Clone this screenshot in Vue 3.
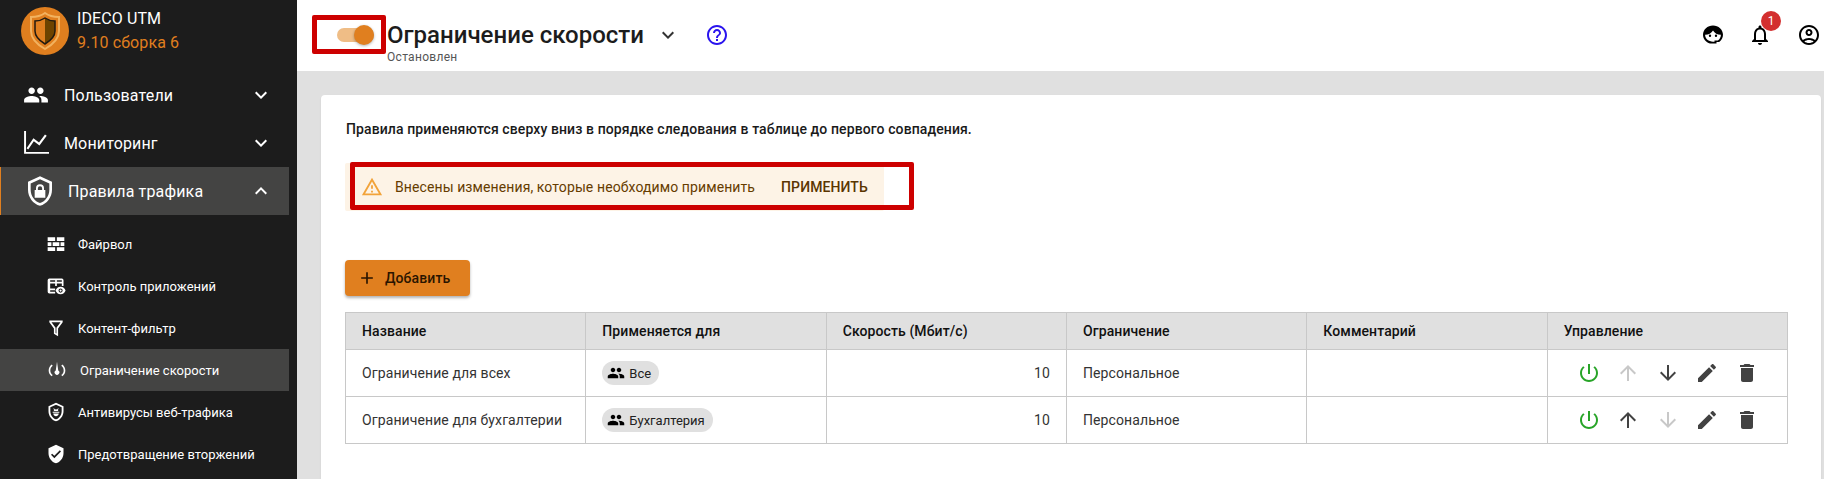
<script setup>
const icons = {
  people: 'M16 11c1.660 0 2.990-1.340 2.990-3S17.660 5 16 5c-1.660 0-3 1.340-3 3s1.340 3 3 3zm-8 0c1.660 0 2.990-1.340 2.990-3S9.660 5 8 5C6.340 5 5 6.340 5 8s1.340 3 3 3zm0 2c-2.330 0-7 1.170-7 3.500V19h14v-2.500c0-2.330-4.670-3.500-7-3.500zm8 0c-.29 0-.62.02-.97.05 1.160.84 1.970 1.970 1.970 3.450V19h6v-2.500c0-2.330-4.670-3.500-7-3.500z',
  chart: 'M1 1h1.800v19.400H24V22H1zM3.300 16.900L9.600 7.600l5.200 4 5.500-7.400 1.600 1.100-6.700 9.100-5.200-4L4.800 18z',
  down: 'M16.590 8.590L12 13.170 7.410 8.590 6 10l6 6 6-6z',
  up: 'M12 8l-6 6 1.410 1.410L12 10.830l4.590 4.580L18 14z',
  lock: 'M12 1L3 5v6c0 5.550 3.840 10.740 9 12 5.160-1.260 9-6.450 9-12V5l-9-4zm0 2.200l7 3.100V11c0 4.500-3 8.900-7 10-4-1.100-7-5.500-7-10V6.300l7-3.100zM12 7a3 3 0 0 0-3 3v1.200H8V17h8v-5.800h-1V10a3 3 0 0 0-3-3zm0 1.400a1.600 1.600 0 0 1 1.600 1.600v1.200h-3.200V10A1.600 1.600 0 0 1 12 8.400z',
  wall: 'M2 4h9v4.500H2zM13 4h9v4.500h-9zM2 10h4.500v4.500H2zM8 10h8v4.500H8zM17.500 10H22v4.500h-4.500zM2 16h9v4.500H2zM13 16h9v4.500h-9z',
  apps: 'M4 3h15a2 2 0 0 1 2 2v7h-2V9h-6v3h-2V9H5v6h6v2H5v2h6v2H4a2 2 0 0 1-2-2V5a2 2 0 0 1 2-2zm1 2v2h6V5zm8 0v2h6V5zM17.500 13c-3 0-5 2-6 4.500 1 2.500 3 4.500 6 4.500s5-2 6-4.500c-1-2.500-3-4.500-6-4.500zm0 7a2.500 2.500 0 1 1 0-5 2.500 2.500 0 0 1 0 5zm0-1.200a1.300 1.300 0 1 0 0-2.600 1.300 1.300 0 0 0 0 2.600z',
  filter: 'M4 3h16v2l-5.500 7.500V22l-5-3v-6.500L4 5zm2.600 2l4.900 6.700v6.300l1 .6v-6.900L17.400 5z',
  speed: 'M12 2l1.500 10.500a2.800 2.800 0 1 1-3 0zM5.500 5.500l1.400 1.400C5 8.500 4 10.100 4 12.500s1 4 2.900 5.600l-1.400 1.400C3.300 17.600 2 15.300 2 12.500s1.300-5.100 3.500-7zM18.500 5.500c2.200 1.900 3.500 4.200 3.500 7s-1.300 5.100-3.500 7l-1.400-1.400c1.900-1.600 2.900-3.200 2.900-5.600s-1-4-2.900-5.600z',
  bug: 'M12 1L3 5v6c0 5.550 3.840 10.740 9 12 5.160-1.260 9-6.450 9-12V5l-9-4zm0 2.400l6.800 3V11c0 4.400-2.900 8.600-6.800 9.800-3.900-1.200-6.800-5.400-6.800-9.800V6.400l6.800-3zM9.500 7.500L10.800 9a3 3 0 0 1 2.400 0l1.300-1.500.7.600-1.100 1.400c.4.400.6.800.7 1.300h-5.600c.1-.5.300-.9.700-1.300L8.800 8.100zM8 11.800h8V13H8zm.7 2h6.600c-.3 2-1.600 3.400-3.300 3.400S9 15.800 8.700 13.800z',
  shield: 'M12 1L3 5v6c0 5.550 3.840 10.740 9 12 5.160-1.260 9-6.450 9-12V5l-9-4zm-2 16l-4-4 1.410-1.410L10 14.170l6.590-6.590L18 9l-8 8z',
  help: 'M11 18h2v-2h-2v2zm1-16C6.480 2 2 6.480 2 12s4.480 10 10 10 10-4.480 10-10S17.520 2 12 2zm0 18c-4.410 0-8-3.590-8-8s3.590-8 8-8 8 3.590 8 8-3.590 8-8 8zm0-14c-2.210 0-4 1.790-4 4h2c0-1.100.9-2 2-2s2 .9 2 2c0 2-3 1.750-3 5h2c0-2.250 3-2.500 3-5 0-2.210-1.790-4-4-4z',
  bell: 'M12 22c1.100 0 2-.9 2-2h-4c0 1.100.9 2 2 2zm6-6v-5c0-3.070-1.630-5.640-4.500-6.320V4c0-.83-.67-1.500-1.500-1.500s-1.500.67-1.500 1.500v.68C7.640 5.360 6 7.920 6 11v5l-2 2v1h16v-1l-2-2zm-2 1H8v-6c0-2.480 1.510-4.500 4-4.500s4 2.020 4 4.500v6z',
  account: 'M12 2C6.480 2 2 6.480 2 12s4.480 10 10 10 10-4.480 10-10S17.520 2 12 2zM7.350 18.500C8.660 17.560 10.260 17 12 17s3.340.56 4.650 1.500C15.340 19.440 13.740 20 12 20s-3.340-.56-4.650-1.500zm10.790-1.380C16.450 15.800 14.320 15 12 15s-4.450.8-6.140 2.120C4.700 15.730 4 13.950 4 12c0-4.420 3.580-8 8-8s8 3.580 8 8c0 1.950-.7 3.730-1.860 5.120zM12 6c-1.930 0-3.500 1.570-3.500 3.500S10.070 13 12 13s3.500-1.570 3.500-3.500S13.930 6 12 6zm0 5c-.83 0-1.500-.67-1.500-1.500S11.170 8 12 8s1.500.67 1.500 1.500S12.830 11 12 11z',
  agent: 'M12 2.500C6.500 2.500 2 6.700 2 11.800c0 4.100 2.900 7.500 7 8.700h6.500v-1.600h2.700c2.400-1.600 3.800-4.200 3.800-7.100C22 6.700 17.500 2.500 12 2.500zM4.100 11.800c3.600 0 6.200-1.500 7.900-4.300 1.700 2.800 4.300 4.300 7.900 4.300 0 2.400-1.200 4.500-3 5.700h-3.400v1.200H12c-4.400 0-7.900-3-7.900-6.900zM9 11.500a1.200 1.200 0 1 0 0 2.400 1.200 1.200 0 0 0 0-2.400zm6 0a1.200 1.200 0 1 0 0 2.400 1.200 1.200 0 0 0 0-2.400z',
  warning: 'M12 5.990L19.530 19H4.470L12 5.990M12 2L1 21h22L12 2zm1 14h-2v2h2v-2zm0-6h-2v4h2v-4z',
  add: 'M19 13h-6v6h-2v-6H5v-2h6V5h2v6h6v2z',
  power: 'M13 3h-2v10h2V3zm4.830 2.170l-1.420 1.420C17.990 7.860 19 9.810 19 12c0 3.870-3.130 7-7 7s-7-3.130-7-7c0-2.190 1.010-4.140 2.580-5.420L6.170 5.170C4.230 6.820 3 9.260 3 12c0 4.970 4.030 9 9 9s9-4.030 9-9c0-2.740-1.230-5.180-3.170-6.830z',
  arrowUp: 'M4 12l1.410 1.410L11 7.830V20h2V7.830l5.580 5.590L20 12l-8-8-8 8z',
  arrowDown: 'M20 12l-1.410-1.410L13 16.170V4h-2v12.170l-5.580-5.590L4 12l8 8 8-8z',
  edit: 'M3 17.250V21h3.750L17.810 9.940l-3.750-3.750L3 17.250zM20.710 7.040c.39-.39.39-1.020 0-1.410l-2.340-2.340c-.39-.39-1.020-.39-1.410 0l-1.830 1.830 3.750 3.750 1.830-1.830z',
  trash: 'M6 19c0 1.100.9 2 2 2h8c1.100 0 2-.9 2-2V7H6v12zM19 4h-3.500l-1-1h-5l-1 1H5v2h14V4z',
}

const mainMenu = [
  { label: 'Пользователи', icon: 'people', open: false },
  { label: 'Мониторинг', icon: 'chart', open: false },
  { label: 'Правила трафика', icon: 'lock', open: true },
]
const subMenu = [
  { label: 'Файрвол', icon: 'wall' },
  { label: 'Контроль приложений', icon: 'apps' },
  { label: 'Контент-фильтр', icon: 'filter' },
  { label: 'Ограничение скорости', icon: 'speed', active: true },
  { label: 'Антивирусы веб-трафика', icon: 'bug' },
  { label: 'Предотвращение вторжений', icon: 'shield' },
]
const columns = ['Название', 'Применяется для', 'Скорость (Мбит/с)', 'Ограничение', 'Комментарий', 'Управление']
const rows = [
  { name: 'Ограничение для всех', group: 'Все', speed: 10, kind: 'Персональное', canUp: false, canDown: true },
  { name: 'Ограничение для бухгалтерии', group: 'Бухгалтерия', speed: 10, kind: 'Персональное', canUp: true, canDown: false },
]
</script>

<template>
  <div class="page">
    <aside class="sidebar">
      <div class="brand">
        <svg class="logo" width="48" height="48" viewBox="0 0 48 48">
          <circle cx="24" cy="24" r="24" fill="#e07f1f" />
          <path d="M24 6c4 3 9 4 14 4v14c0 8-7 14-14 18-7-4-14-10-14-18V10c5 0 10-1 14-4z" fill="none" stroke="#f2b25f" stroke-width="2" />
          <path d="M24 11c3 2 7 3 10 3v10c0 6-5 10-10 13z" fill="#6d4300" />
          <path d="M24 11c3 2 7 3 10 3v10c0 6-5 10-10 13-5-3-10-7-10-13V14c3 0 7-1 10-3z" fill="none" stroke="#201a10" stroke-width="1.500" />
        </svg>
        <div>
          <div class="brand-name">IDECO UTM</div>
          <div class="brand-version">9.10 сборка 6</div>
        </div>
      </div>
      <div v-for="item in mainMenu" :key="item.label" class="menu-item" :class="{ open: item.open }">
        <svg class="menu-icon" viewBox="0 0 24 24"><path fill-rule="evenodd" :d="icons[item.icon]" /></svg>
        <span class="menu-label">{{ item.label }}</span>
        <svg class="menu-arrow" width="24" height="24" viewBox="0 0 24 24"><path :d="item.open ? icons.up : icons.down" /></svg>
      </div>
      <div class="submenu">
        <div v-for="item in subMenu" :key="item.label" class="sub-item" :class="{ active: item.active }">
          <svg width="20" height="20" viewBox="0 0 24 24"><path fill-rule="evenodd" :d="icons[item.icon]" /></svg>
          <span>{{ item.label }}</span>
        </div>
      </div>
    </aside>

    <div class="content">
      <header class="topbar">
        <div class="switch-wrap">
          <div class="switch"><span class="thumb"></span></div>
          <span class="mark mark-switch"></span>
        </div>
        <div class="title-block">
          <div class="title">Ограничение скорости</div>
          <div class="status">Остановлен</div>
        </div>
        <svg class="title-arrow" width="24" height="24" viewBox="0 0 24 24"><path :d="icons.down" /></svg>
        <svg class="help" width="24" height="24" viewBox="0 0 24 24"><path :d="icons.help" /></svg>
        <div class="top-actions">
          <svg width="24" height="24" viewBox="0 0 24 24"><path fill-rule="evenodd" :d="icons.agent" /></svg>
          <div class="bell">
            <svg width="24" height="24" viewBox="0 0 24 24"><path :d="icons.bell" /></svg>
            <span class="badge">1</span>
          </div>
          <svg width="24" height="24" viewBox="0 0 24 24"><path :d="icons.account" /></svg>
        </div>
      </header>

      <main class="main">
        <section class="card">
          <p class="hint">Правила применяются сверху вниз в порядке следования в таблице до первого совпадения.</p>

          <div class="alert-wrap">
            <div class="alert">
              <svg width="22" height="22" viewBox="0 0 24 24"><path :d="icons.warning" /></svg>
              <span class="alert-text">Внесены изменения, которые необходимо применить</span>
              <span class="alert-action">ПРИМЕНИТЬ</span>
            </div>
            <span class="mark mark-alert"></span>
          </div>

          <button class="add">
            <svg width="20" height="20" viewBox="0 0 24 24"><path :d="icons.add" /></svg>
            Добавить
          </button>

          <table class="rules">
            <thead>
              <tr><th v-for="col in columns" :key="col">{{ col }}</th></tr>
            </thead>
            <tbody>
              <tr v-for="row in rows" :key="row.name">
                <td>{{ row.name }}</td>
                <td>
                  <span class="chip">
                    <svg width="18" height="18" viewBox="0 0 24 24"><path :d="icons.people" /></svg>
                    {{ row.group }}
                  </span>
                </td>
                <td class="num">{{ row.speed }}</td>
                <td>{{ row.kind }}</td>
                <td></td>
                <td>
                  <div class="actions">
                    <svg class="on" width="24" height="24" viewBox="0 0 24 24"><path :d="icons.power" /></svg>
                    <svg :class="{ off: !row.canUp }" width="24" height="24" viewBox="0 0 24 24"><path :d="icons.arrowUp" /></svg>
                    <svg :class="{ off: !row.canDown }" width="24" height="24" viewBox="0 0 24 24"><path :d="icons.arrowDown" /></svg>
                    <svg width="24" height="24" viewBox="0 0 24 24"><path :d="icons.edit" /></svg>
                    <svg width="24" height="24" viewBox="0 0 24 24"><path :d="icons.trash" /></svg>
                  </div>
                </td>
              </tr>
            </tbody>
          </table>
        </section>
      </main>
    </div>
  </div>
</template>

<style>
html, body { margin: 0; height: 100%; overflow: hidden; }
</style>

<style scoped>
.page {
  display: flex;
  height: 479px;
  overflow: hidden;
  font-family: Roboto, "Liberation Sans", sans-serif;
  color: #212121;
  letter-spacing: 0.1px;
}
.sidebar {
  flex: 0 0 297px;
  background: #1c1c1c;
  color: #fff;
  padding-right: 8px;
  box-sizing: border-box;
}
.brand {
  display: flex;
  align-items: center;
  gap: 8px;
  height: 71px;
  padding: 0 0 9px 21px;
  box-sizing: border-box;
}
.brand-name { font-size: 16px; line-height: 24px; }
.brand-version { font-size: 16px; line-height: 24px; color: #e07f1f; }
.menu-item {
  display: flex;
  align-items: center;
  height: 48px;
  padding-left: 23px;
  font-size: 16px;
  letter-spacing: 0.15px;
}
.menu-item svg { fill: #fff; }
.menu-icon { flex: none; width: 26px; height: 26px; }
.menu-label { margin-left: 15px; flex: 1; }
.menu-arrow { margin-right: 16px; }
.menu-item.open {
  background: #444443;
  border-left: 1px solid #e07f1f;
  padding-left: 23px;
}
.menu-item.open .menu-icon { width: 32px; height: 32px; }
.menu-item.open .menu-label { margin-left: 12px; }
.submenu { padding-top: 8px; }
.sub-item {
  display: flex;
  align-items: center;
  gap: 12px;
  height: 42px;
  padding-left: 46px;
  font-size: 13px;
  letter-spacing: 0;
}
.sub-item svg { fill: #fff; flex: none; }
.sub-item.active {
  background: #444443;
  padding-left: 47px;
  gap: 13px;
}
.content {
  flex: 1;
  min-width: 0;
  display: flex;
  flex-direction: column;
  background: #e0e0e0;
}
.topbar {
  flex: 0 0 71px;
  display: flex;
  align-items: flex-start;
  background: #fff;
  padding-left: 40px;
  box-sizing: border-box;
  letter-spacing: 0;
}
.switch-wrap {
  position: relative;
  width: 50px;
  height: 71px;
}
.switch {
  position: absolute;
  left: 0;
  top: 28px;
  width: 37px;
  height: 14px;
  border-radius: 7px;
  background: #efbd86;
}
.thumb {
  position: absolute;
  right: 0;
  top: -3px;
  width: 20px;
  height: 20px;
  border-radius: 50%;
  background: #e07f1f;
  box-shadow: 0 1px 3px rgba(0, 0, 0, 0.3);
}
.mark {
  position: absolute;
  border: 5px solid #cd0000;
  border-radius: 2px;
  box-sizing: border-box;
  pointer-events: none;
}
.mark-switch { left: -25px; top: 15px; width: 74px; height: 39px; }
.title-block { padding-top: 20px; }
.title { font-size: 24px; font-weight: 500; line-height: 30px; color: #1c1c1c; }
.status { font-size: 12px; line-height: 14px; color: #555; letter-spacing: 0.3px; }
.title-arrow { margin: 23px 0 0 12px; fill: #333; }
.help { margin: 23px 0 0 25px; fill: #2a14ee; }
.top-actions {
  margin-left: auto;
  display: flex;
  gap: 23px;
  padding: 23px 3px 0 0;
}
.bell { position: relative; height: 24px; margin-right: 2px; }
.badge {
  position: absolute;
  left: 13px;
  top: -12px;
  width: 20px;
  height: 20px;
  border-radius: 50%;
  background: #d32f2f;
  color: #fff;
  font-size: 12px;
  line-height: 20px;
  text-align: center;
}
.main {
  flex: 1;
  min-height: 0;
  padding: 24px 3px 0 24px;
}
.card {
  height: 100%;
  background: #fff;
  border-radius: 4px 4px 0 0;
  padding: 24px 32px 0 25px;
  box-sizing: border-box;
  box-shadow: 0 1px 2px rgba(0, 0, 0, 0.08);
}
.hint {
  margin: 0;
  font-size: 14px;
  font-weight: 500;
  line-height: 20px;
  color: #1a1a1a;
}
.alert-wrap {
  position: relative;
  width: fit-content;
  margin: 24px 0 0 -1px;
}
.alert {
  display: flex;
  align-items: center;
  height: 48px;
  padding: 0 16px;
  box-sizing: border-box;
  background: #fdf3e6;
  border-radius: 2px;
  font-size: 14px;
  color: #663c00;
  white-space: nowrap;
}
.alert svg { fill: #f2a33a; flex: none; }
.alert-text { margin-left: 12px; }
.alert-action { margin-left: 26px; font-weight: 500; color: #5a3500; }
.mark-alert { left: 5px; top: -1px; width: 564px; height: 48px; }
.add {
  display: flex;
  align-items: center;
  gap: 8px;
  height: 36px;
  margin: 49px 0 0 -1px;
  padding: 0 20px 0 12px;
  border: 0;
  border-radius: 4px;
  background: #e07f1f;
  color: #2a1500;
  font: 500 14px Roboto, sans-serif;
  letter-spacing: 0.1px;
  box-shadow: 0 2px 3px rgba(0, 0, 0, 0.3);
}
.add svg { fill: #2a1500; }
.rules {
  width: 1443px;
  margin: 16px 0 0 -1px;
  table-layout: fixed;
  border-collapse: collapse;
  font-size: 14px;
}
.rules th,
.rules td {
  border: 1px solid #c8c8c8;
  padding: 0 16px;
  text-align: left;
}
.rules th {
  height: 36px;
  background: #e0e0e0;
  font-weight: 500;
  color: #111;
}
.rules td { height: 46px; color: #333; }
.rules td.num { text-align: right; }
.chip {
  display: inline-flex;
  align-items: center;
  gap: 4px;
  height: 24px;
  padding: 0 8px 0 5px;
  border-radius: 12px;
  background: #e0e0e0;
  font-size: 13px;
  letter-spacing: 0;
  color: #212121;
}
.actions {
  display: flex;
  gap: 15.5px;
  padding-left: 13px;
  fill: #424242;
}
.actions .on { fill: #28a428; }
.actions .off { fill: #c8c8c8; }
</style>
